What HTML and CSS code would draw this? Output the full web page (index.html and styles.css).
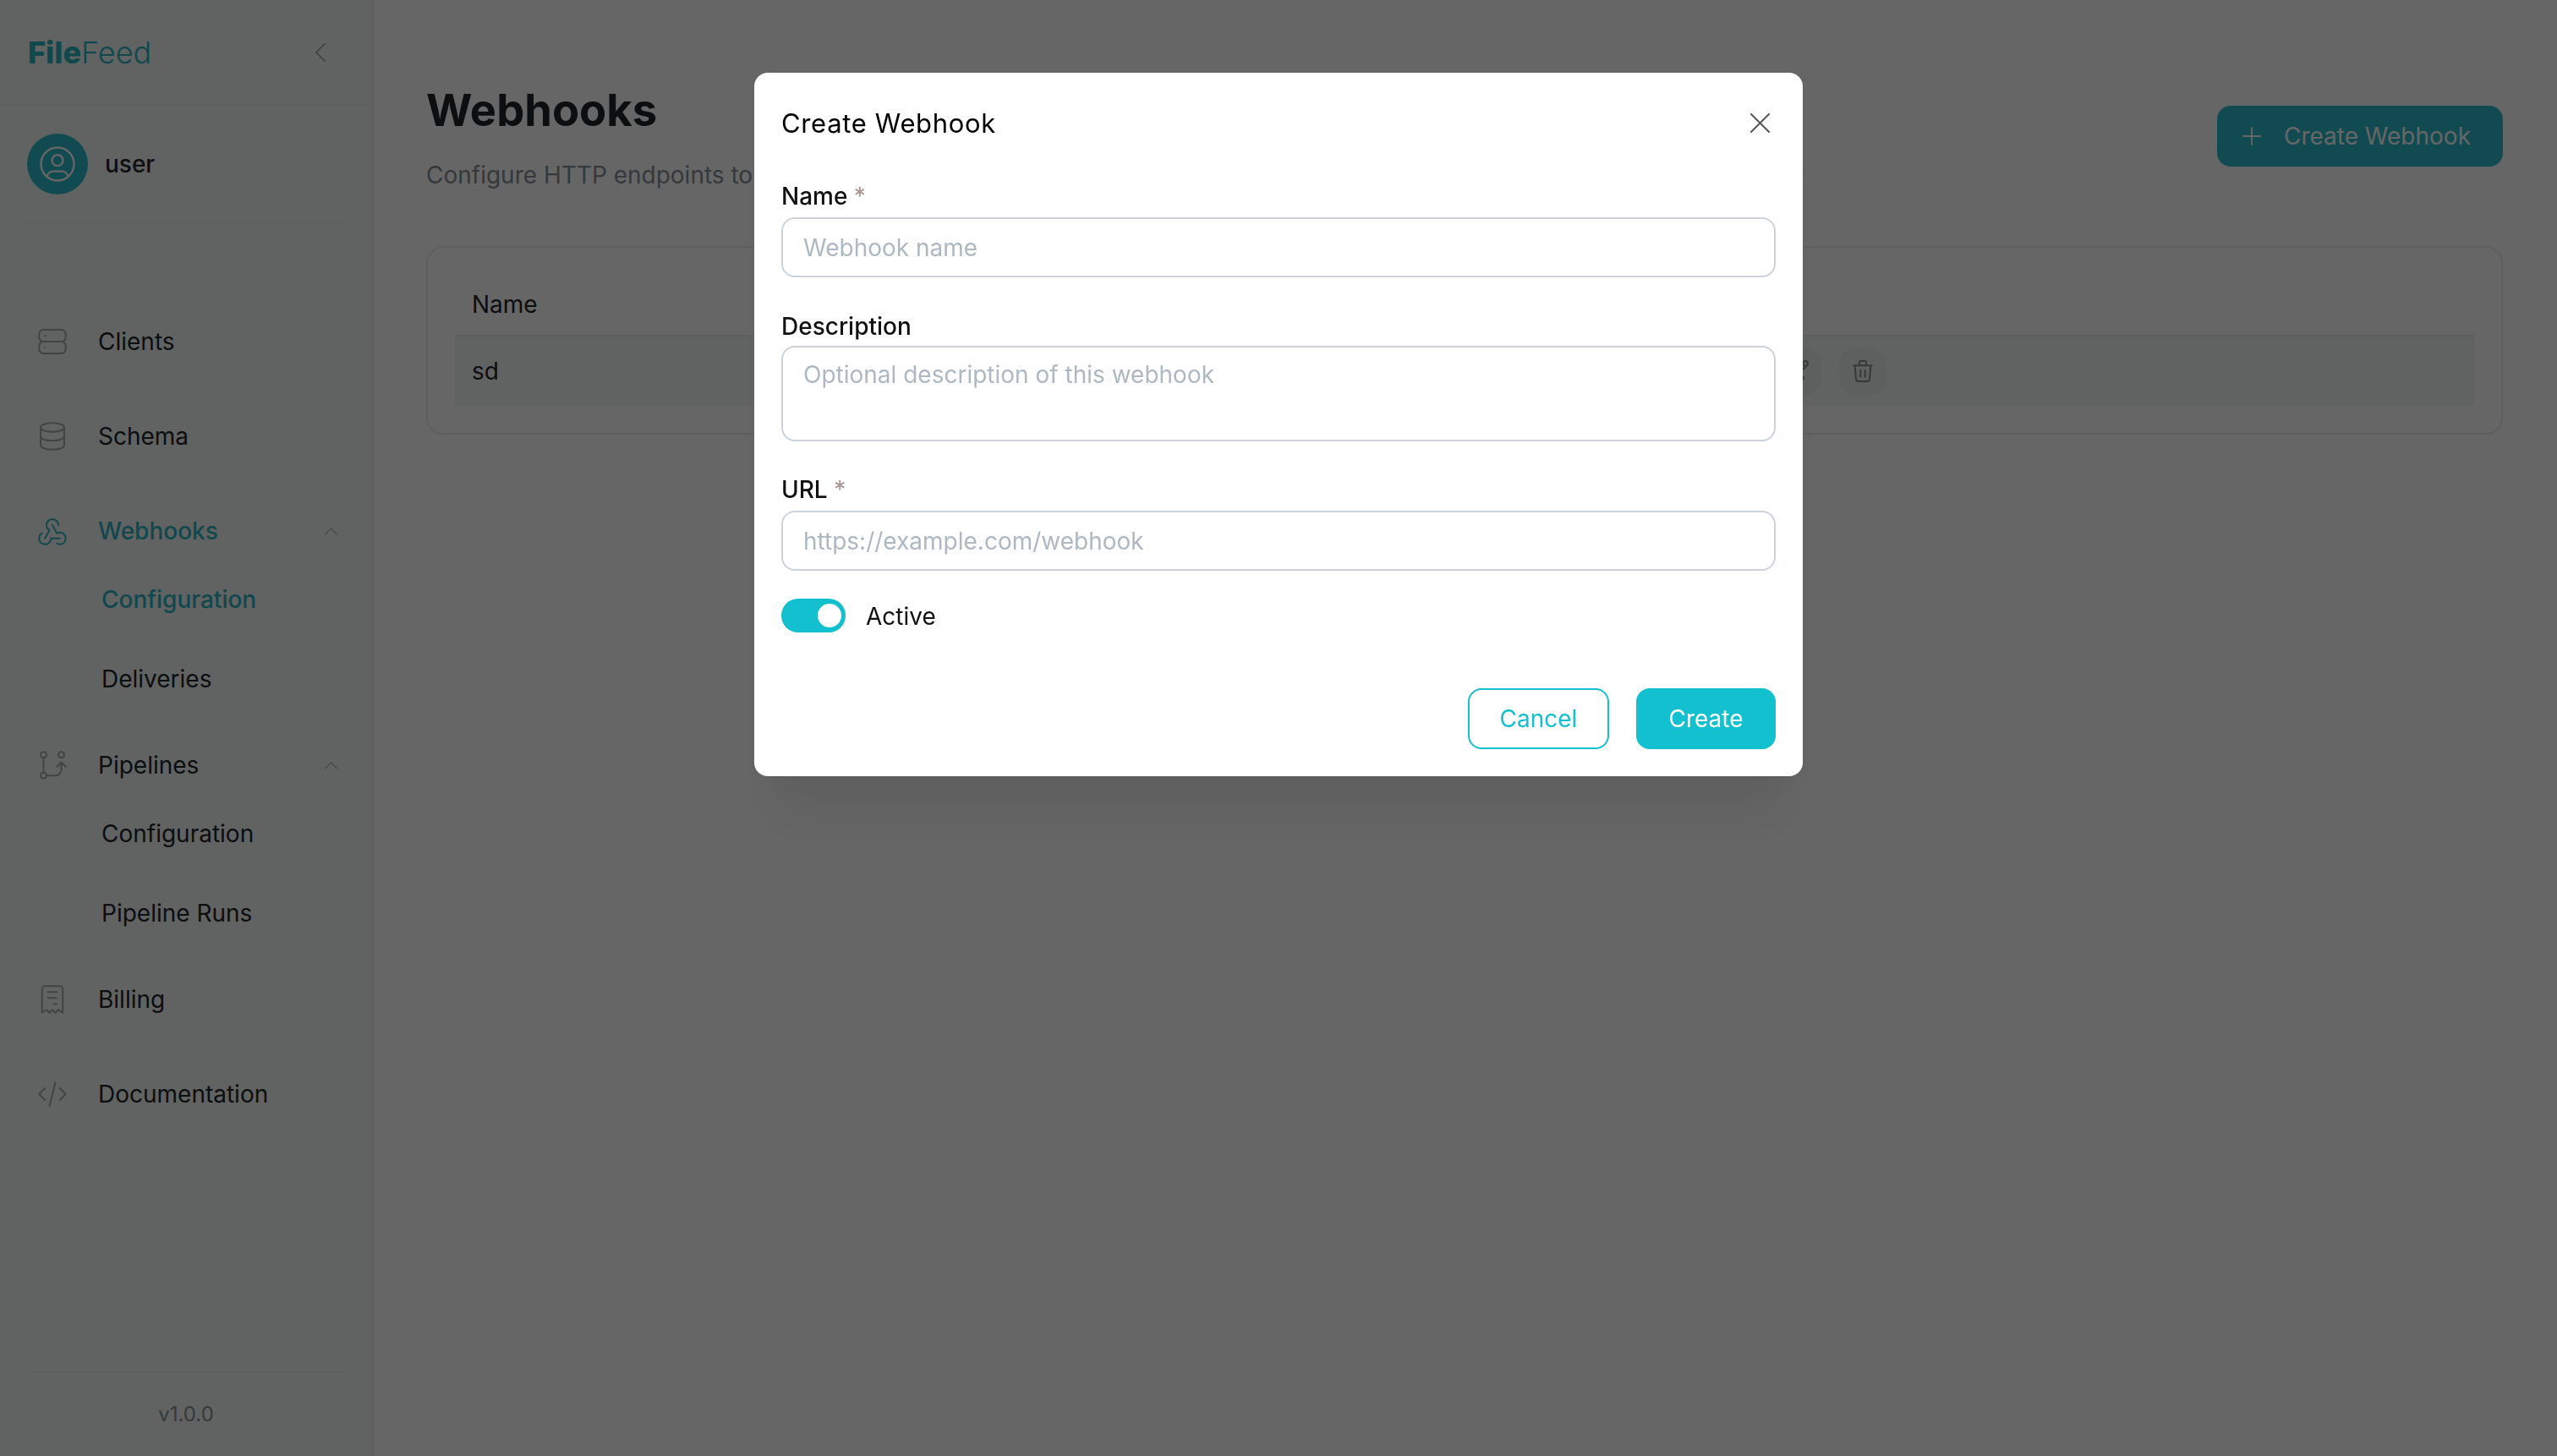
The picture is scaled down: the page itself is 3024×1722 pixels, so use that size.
FILE: index.html
```html
<!DOCTYPE html>
<html lang="en">
<head>
<meta charset="UTF-8">
<title>Webhooks</title>
<link rel="stylesheet" href="styles.css">
</head>
<body>

<div class="app">
    <aside class="sidebar">
        <div class="brand">
            <div class="logo"><b>File</b>Feed</div>
            <svg class="collapse" viewBox="0 0 12 22"><path d="M11 1L1 11l10 10"/></svg>
        </div>

        <div class="user">
            <div class="avatar">
                <svg viewBox="0 0 24 24"><circle cx="12" cy="12" r="9"/><circle cx="12" cy="10" r="3"/><path d="M6.168 18.849a4 4 0 0 1 3.832-2.849h4a4 4 0 0 1 3.834 2.855"/></svg>
            </div>
            <span class="user-name">user</span>
        </div>

        <nav class="nav">
            <a class="nav-item">
                <svg class="icon" viewBox="0 0 24 24"><rect x="3" y="4" width="18" height="8" rx="3"/><rect x="3" y="12" width="18" height="8" rx="3"/><path d="M7 8v.01M7 16v.01"/></svg>
                Clients
            </a>
            <a class="nav-item">
                <svg class="icon" viewBox="0 0 24 24"><ellipse cx="12" cy="6" rx="8" ry="3"/><path d="M4 6v6a8 3 0 0 0 16 0V6"/><path d="M4 12v6a8 3 0 0 0 16 0v-6"/></svg>
                Schema
            </a>

            <div class="nav-group">
                <a class="nav-item active">
                    <svg class="icon" viewBox="0 0 24 24"><path d="M4.876 13.61a4 4 0 1 0 6.124 3.39h6"/><path d="M15.066 20.502a4 4 0 1 0 1.934-7.502c-.706 0-1.424.179-2 .5l-3-5.5"/><path d="M16 8a4 4 0 1 0-8 0c0 1.506.77 2.818 2 3.5l-3 5.5"/></svg>
                    Webhooks
                    <svg class="chevron" viewBox="0 0 18 10"><path d="M1 9l8-8 8 8"/></svg>
                </a>
                <div class="sub-items">
                    <a class="sub-item active">Configuration</a>
                    <a class="sub-item">Deliveries</a>
                </div>
            </div>

            <div class="nav-group">
                <a class="nav-item">
                    <svg class="icon" viewBox="0 0 24 24"><circle cx="6" cy="5" r="2"/><circle cx="6" cy="19" r="2"/><circle cx="18" cy="5" r="2"/><path d="M6 7v10M8 19h6a4 4 0 0 0 4-4v-5M15 13l3-3 3 3"/></svg>
                    Pipelines
                    <svg class="chevron" viewBox="0 0 18 10"><path d="M1 9l8-8 8 8"/></svg>
                </a>
                <div class="sub-items">
                    <a class="sub-item">Configuration</a>
                    <a class="sub-item">Pipeline Runs</a>
                </div>
            </div>

            <a class="nav-item">
                <svg class="icon" viewBox="0 0 24 24"><path d="M5 21V5a2 2 0 0 1 2-2h10a2 2 0 0 1 2 2v16l-3-2-2 2-2-2-2 2-2-2-3 2"/><path d="M9 7h6M9 11h6M13 15h2"/></svg>
                Billing
            </a>
            <a class="nav-item">
                <svg class="icon" viewBox="0 0 24 24"><path d="M7 8l-4 4 4 4M17 8l4 4-4 4M14 4l-4 16"/></svg>
                Documentation
            </a>
        </nav>

        <div class="version">v1.0.0</div>
    </aside>

    <main class="main">
        <div class="page-head">
            <div>
                <h1 class="page-title">Webhooks</h1>
                <p class="page-sub">Configure HTTP endpoints to</p>
            </div>
            <button class="btn-add">
                <svg viewBox="0 0 24 24"><path d="M12 1v22M1 12h22"/></svg>
                Create Webhook
            </button>
        </div>

        <div class="card">
            <div class="table-head">Name</div>
            <div class="table-row">
                <span class="cell-name">sd</span>
                <div class="row-actions">
                    <span class="action">
                        <svg viewBox="0 0 24 24"><path d="M7 7H6a2 2 0 0 0-2 2v9a2 2 0 0 0 2 2h9a2 2 0 0 0 2-2v-1"/><path d="M20.385 6.585a2.1 2.1 0 0 0-2.97-2.97L9 12v3h3l8.385-8.415"/><path d="M16 5l3 3"/></svg>
                    </span>
                    <span class="action">
                        <svg viewBox="0 0 24 24"><path d="M4 7h16M10 11v6M14 11v6M5 7l1 12a2 2 0 0 0 2 2h8a2 2 0 0 0 2-2l1-12M9 7V4a1 1 0 0 1 1-1h4a1 1 0 0 1 1 1v3"/></svg>
                    </span>
                </div>
            </div>
        </div>
    </main>
</div>

<div class="overlay">
    <div class="modal">
        <div class="modal-head">
            <h2 class="modal-title">Create Webhook</h2>
            <svg class="modal-close" viewBox="0 0 24 24"><path d="M1 1l22 22M23 1L1 23"/></svg>
        </div>

        <label class="field">
            <span class="field-label">Name <i>*</i></span>
            <input class="input" type="text" placeholder="Webhook name">
        </label>
        <label class="field">
            <span class="field-label">Description</span>
            <textarea class="input textarea" placeholder="Optional description of this webhook"></textarea>
        </label>
        <label class="field">
            <span class="field-label">URL <i>*</i></span>
            <input class="input" type="text" placeholder="https://example.com/webhook">
        </label>

        <div class="switch-row">
            <span class="switch"><span class="knob"></span></span>
            <span class="switch-text">Active</span>
        </div>

        <div class="modal-actions">
            <button class="btn btn-outline">Cancel</button>
            <button class="btn btn-solid">Create</button>
        </div>
    </div>
</div>

</body>
</html>
```

FILE: styles.css
```css
* { margin: 0; padding: 0; box-sizing: border-box; }

body {
    overflow: hidden;
    height: 1722px;
    background: white;
    color: #212529;
    font-family: "Inter", "Liberation Sans", sans-serif;
    font-size: 28px;
}

svg {
    fill: none;
    stroke: currentColor;
    stroke-width: 1.5;
    stroke-linecap: round;
    stroke-linejoin: round;
}

.app {
    display: flex;
    height: 1722px;
}

/* sidebar */
.sidebar {
    display: flex;
    flex-direction: column;
    width: 442px;
    flex-shrink: 0;
    background: #f2f6f4;
    border-right: 2px solid #ebebeb;
}

.brand {
    display: flex;
    align-items: center;
    justify-content: space-between;
    height: 125px;
    padding: 0 55px 0 33px;
    border-bottom: 2px solid #e9ecef;
}

.logo {
    color: #2bb3c2;
    font-size: 36px;
    font-weight: 300;
}

.logo b { font-weight: 800; }

.collapse {
    width: 12px;
    height: 22px;
    color: #999;
    stroke-width: 1.5;
}

.user {
    display: flex;
    align-items: center;
    gap: 20px;
    height: 139px;
    margin: 0 32px;
    border-bottom: 2px solid #e9ecef;
}

.avatar {
    display: flex;
    align-items: center;
    justify-content: center;
    width: 72px;
    height: 72px;
    border-radius: 50%;
    background: #2bb9cb;
    color: white;
}

.avatar svg { width: 52px; height: 52px; stroke-width: 1.1; }

.user-name { font-weight: 500; }

.nav {
    display: flex;
    flex-direction: column;
    margin-top: 112px;
    padding: 0 40px 0 41px;
}

.nav-item {
    display: flex;
    align-items: center;
    height: 56px;
    margin-bottom: 56px;
    gap: 33px;
}

.nav-group .nav-item { margin-bottom: 29px; }

.nav-item.active { color: #2bb3c2; font-weight: 500; }

.icon {
    width: 42px;
    height: 42px;
    flex-shrink: 0;
    color: #a8a8a8;
    stroke-width: 1.15;
}

.active .icon { color: #2bb3c2; }

.chevron {
    width: 17px;
    height: 9px;
    margin-left: auto;
    color: #a8a8a8;
    stroke-width: 1.2;
}

.sub-items {
    display: flex;
    flex-direction: column;
    gap: 46px;
    padding: 0 0 50px 79px;
}

.sub-item {
    display: flex;
    align-items: center;
    height: 48px;
}

.sub-item.active { color: #2bb3c2; font-weight: 500; }

.version {
    margin: auto 32px 0;
    padding: 31px 0 30px;
    border-top: 2px solid #e9ecef;
    color: #868e96;
    font-size: 24px;
    line-height: 38px;
    text-align: center;
}

/* main */
.main {
    flex: 1;
    padding: 96px 64px 0 62px;
}

.page-head {
    display: flex;
    justify-content: space-between;
    align-items: flex-start;
}

.page-title {
    font-size: 52.5px;
    font-weight: 700;
    line-height: 68px;
}

.page-sub {
    margin-top: 23px;
    color: #868e96;
    line-height: 40px;
}

.btn-add {
    display: flex;
    align-items: center;
    gap: 27px;
    height: 72px;
    margin-top: 29px;
    padding: 0 38px 0 30px;
    border: none;
    border-radius: 16px;
    background: #2bb9cb;
    color: white;
    font: inherit;
}

.btn-add svg { width: 22px; height: 22px; stroke-width: 2; }

.card {
    margin-top: 64px;
    padding: 32px;
    border: 2px solid #e9ecef;
    border-radius: 20px;
}

.table-head {
    height: 71px;
    padding-left: 20px;
    font-weight: 400;
    line-height: 70px;
}

.table-row {
    display: grid;
    grid-template-columns: 1540px auto;
    align-items: center;
    height: 84px;
    padding-left: 20px;
    border-top: 2px solid #e9ecef;
    background: #f3f6f5;
}

.row-actions {
    display: flex;
    gap: 21px;
}

.action {
    display: flex;
    align-items: center;
    justify-content: center;
    width: 56px;
    height: 56px;
    border-radius: 20px;
    background: #ebefee;
    color: #8a8a8a;
}

.action svg { width: 32px; height: 32px; }

/* modal */
.overlay {
    position: fixed;
    inset: 0;
    display: flex;
    justify-content: center;
    align-items: flex-start;
    padding-top: 86px;
    background: rgba(0,0,0,0.6);
}

.modal {
    display: flex;
    flex-direction: column;
    width: 1240px;
    height: 832px;
    padding: 32px;
    border-radius: 16px;
    background: white;
    box-shadow: 0 2px 6px rgba(0,0,0,.05), 0 72px 56px -14px rgba(0,0,0,.05), 0 34px 34px -14px rgba(0,0,0,.04);
}

.modal-head {
    display: flex;
    align-items: center;
    justify-content: space-between;
    height: 55px;
    margin-bottom: 40px;
    padding-right: 7px;
}

.modal-title {
    color: #000;
    font-size: 31px;
    font-weight: 400;
    letter-spacing: .65px;
}

.modal-close {
    width: 23px;
    height: 23px;
    color: #555;
    stroke-width: 2;
}

.field {
    display: block;
    margin-bottom: 39px;
}

.field:nth-of-type(2) { margin-bottom: 38px; }

.field:nth-of-type(3) { margin-bottom: 33px; }

.field-label {
    display: block;
    margin-bottom: 5px;
    color: #111;
    font-weight: 500;
    line-height: 39px;
}

.field-label i {
    color: #a89292;
    font-style: normal;
    font-weight: 400;
}

.input {
    display: block;
    width: 100%;
    height: 71px;
    padding: 0 24px;
    border: 2px solid #ccd3dd;
    border-radius: 16px;
    outline: none;
    font: inherit;
    background: white;
}

.input::placeholder { color: #adb8c2; opacity: 1; }

.textarea {
    height: 113px;
    margin-top: -2px;
    padding-top: 12px;
    line-height: 40px;
    resize: none;
}

.switch-row {
    display: flex;
    align-items: center;
    gap: 24px;
    height: 40px;
    color: #111;
}

.switch-text { padding-top: 2px; }

.switch {
    display: flex;
    justify-content: flex-end;
    align-items: center;
    width: 76px;
    height: 40px;
    padding-right: 5px;
    border-radius: 20px;
    background: #13c0cf;
}

.knob {
    width: 28px;
    height: 28px;
    border-radius: 50%;
    background: white;
}

.modal-actions {
    display: flex;
    justify-content: flex-end;
    gap: 32px;
    margin-top: 66px;
}

.btn {
    height: 72px;
    width: 165px;
    border: 2px solid #13c0cf;
    border-radius: 16px;
    font: inherit;
}

.btn-outline { background: white; color: #13c0cf; width: 167px; }

.btn-solid { background: #13c0cf; color: white; }
```
